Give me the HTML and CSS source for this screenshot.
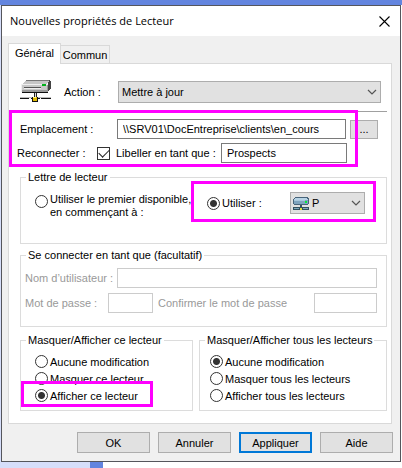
FILE: index.html
```html
<!DOCTYPE html>
<html lang="fr">
<head>
<meta charset="utf-8">
<title>Nouvelles propriétés de Lecteur</title>
<link rel="stylesheet" href="styles.css">
</head>
<body>
<div class="backdrop"></div>
<form class="dialog">
  <header class="titlebar">
    <h1>Nouvelles propriétés de Lecteur</h1>
    <button type="button" class="close" aria-label="Fermer">
      <svg width="11" height="11" viewBox="0 0 11 11"><path d="M.5.5l10 10M10.500.5l-10 10" stroke="#000" stroke-width="1.100" fill="none"/></svg>
    </button>
  </header>
  <nav class="tabs">
    <button type="button" class="tab active">Général</button>
    <button type="button" class="tab">Commun</button>
  </nav>
  <main class="panel">
    <div class="row action">
      <svg class="drive" width="32" height="24" viewBox="0 0 32 24" shape-rendering="crispEdges">
        <path d="M6 0h23v1H6z" fill="#777"/>
        <path d="M6 1h23l-2 3H2z" fill="#c6c6c6"/>
        <path d="M29 0h1v1h1v7l-3 4V4z" fill="#444"/>
        <path d="M1 4h27v8H1z" fill="#999"/>
        <path d="M1 4h27v1H2v7H1z" fill="#efefef"/>
        <path d="M2 5h25v5H2z" fill="#c8c8c8"/>
        <path d="M4 7h17v1H4z" fill="#555"/>
        <path d="M4 8h17v1H4z" fill="#eee"/>
        <path d="M22 4h4v2h-4z" fill="#00b01c"/>
        <path d="M2 12h26v1H2z" fill="#111"/>
        <path d="M14 13h3v4h-3z" fill="#222"/>
        <path d="M15 13h1v4h-1z" fill="#ddd"/>
        <path d="M0 17h31v1H0z" fill="#bbb"/>
        <path d="M0 18h9v1H0zM11 18h9v1h-9zM21 18h10v1H21z" fill="#111"/>
        <path d="M12 17h6v5h-6z" fill="#111"/>
        <path d="M13 17h4v4h-4z" fill="#dfb800"/>
        <path d="M13 17h3v1h-3z" fill="#ffef70"/>
      </svg>
      <label for="action">Action :</label>
      <span class="combo">
        <select id="action"><option>Mettre à jour</option></select>
        <svg width="10" height="6" viewBox="0 0 10 6"><path d="M1 1l4 4 4-4" fill="none" stroke="#555" stroke-width="1.200"/></svg>
      </span>
    </div>
    <section class="location marked">
      <div class="row">
        <label for="path" class="path-label">Emplacement :</label>
        <input id="path" class="path" type="text" value="\\SRV01\DocEntreprise\clients\en_cours">
        <button type="button" class="browse" aria-label="Parcourir">...</button>
      </div>
      <div class="row">
        <label for="reconnect" class="reconnect-label">Reconnecter :</label>
        <input id="reconnect" type="checkbox" checked>
        <label for="name" class="name-label">Libeller en tant que :</label>
        <input id="name" class="name" type="text" value="Prospects">
      </div>
    </section>
    <fieldset class="letter">
      <legend>Lettre de lecteur</legend>
      <div class="row">
        <input id="first" type="radio" name="letter">
        <label for="first" class="first-label">Utiliser le premier disponible,<br>en commençant à :</label>
        <div class="use marked">
          <input id="use" type="radio" name="letter" checked>
          <label for="use">Utiliser :</label>
          <span class="combo">
            <select id="drive" aria-label="Lettre"><option>P</option></select>
            <svg class="mini" width="17" height="14" viewBox="0 0 17 14" shape-rendering="crispEdges">
              <path d="M2 0h13v1h1v6h-1v1H1V7H0V2h1V1h1z" fill="#48647a"/>
              <path d="M2 1h12v1h1v1H1V2h1z" fill="#b7d3e5"/>
              <path d="M1 3h14v4H1z" fill="#7fa4bf"/>
              <path d="M1 3h11v1H1z" fill="#a8c8dc"/>
              <path d="M12 4h2v2h-2z" fill="#00ef35"/>
              <path d="M7 8h2v2H7zM0 10h16v3H0z" fill="#34505f"/>
              <path d="M1 11h14v1H1z" fill="#7ea9bb"/>
              <path d="M6 10h4v3H6z" fill="#34505f"/>
              <path d="M7 11h2v2H7z" fill="#e0e13c"/>
            </svg>
            <svg width="10" height="6" viewBox="0 0 10 6"><path d="M1 1l4 4 4-4" fill="none" stroke="#555" stroke-width="1.200"/></svg>
          </span>
        </div>
      </div>
    </fieldset>
    <fieldset class="connect" disabled>
      <legend>Se connecter en tant que (facultatif)</legend>
      <div class="row">
        <label for="user" class="user-label">Nom d’utilisateur :</label>
        <input id="user" class="user" type="text">
      </div>
      <div class="row">
        <label for="pass" class="pass-label">Mot de passe :</label>
        <input id="pass" class="pass" type="password">
        <label for="confirm" class="confirm-label">Confirmer le mot de passe</label>
        <input id="confirm" class="confirm" type="password">
      </div>
    </fieldset>
    <div class="visibility">
      <fieldset class="one">
        <legend>Masquer/Afficher ce lecteur</legend>
        <label><input type="radio" name="this">Aucune modification</label>
        <label><input type="radio" name="this">Masquer ce lecteur</label>
        <label class="marked"><input type="radio" name="this" checked>Afficher ce lecteur</label>
      </fieldset>
      <fieldset class="all">
        <legend>Masquer/Afficher tous les lecteurs</legend>
        <label><input type="radio" name="all" checked>Aucune modification</label>
        <label><input type="radio" name="all">Masquer tous les lecteurs</label>
        <label><input type="radio" name="all">Afficher tous les lecteurs</label>
      </fieldset>
    </div>
  </main>
  <footer class="buttons">
    <button type="button">OK</button>
    <button type="button">Annuler</button>
    <button type="button" class="primary">Appliquer</button>
    <button type="button">Aide</button>
  </footer>
</form>
<div class="taskbar"></div>
</body>
</html>
```
FILE: styles.css
```css
* { box-sizing: border-box; }
body {
  margin: 0;
  min-height: 100vh;
  background: linear-gradient(90deg, #d6defa 1px, #fff 1px);
  font: 11px/14px "Liberation Sans", sans-serif;
  color: #000;
}
.backdrop { height: 5px; background: #6385df; }
.taskbar { height: 6px; background: linear-gradient(90deg, #d6defa 90px, #6385df 90px, #6385df 103px, #fff 103px); }
.dialog { margin: 0 1px; border: 1px solid #55565c; background: #f0f0f0; }
button, input, select { font: inherit; color: inherit; margin: 0; border-radius: 0; }
button { padding: 0; border: 1px solid #adadad; background: #e1e1e1; }
label { white-space: nowrap; }

.titlebar { display: flex; align-items: center; justify-content: space-between; height: 30px; padding: 0 10px 0 8px; background: #fff; }
h1 { margin: 0; font: 11px/16px "Open Sans", sans-serif; }
.close { display: flex; border: 0; background: none; }

.tabs { display: flex; align-items: flex-end; height: 27px; padding-left: 6px; }
.tab { width: 49px; height: 18px; border: 1px solid #d9d9d9; border-width: 1px 1px 0 0; background: #f0f0f0; }
.tab.active { position: relative; width: 53px; height: 21px; margin-bottom: -1px; padding-bottom: 3px; border-left-width: 1px; background: #fff; }
.panel { margin: 0 8px 0 6px; padding: 17px 4px 12px 11px; border: 1px solid #d9d9d9; background: #fff; }
.row { display: flex; align-items: center; }

.action { height: 22px; padding-right: 6px; }
.drive { margin-right: 12px; }
.action label { width: 54px; }
.action .combo { flex: 1; }
.combo { position: relative; display: flex; height: 22px; }
.combo select { flex: 1; width: 100%; padding: 0 0 0 3px; border: 1px solid #adadad; background: #e1e1e1; appearance: none; }
.combo svg { position: absolute; right: 4px; top: 8px; }
.combo .mini { left: 3px; top: 5px; }

input[type="text"], input[type="password"] { min-width: 0; height: 20px; padding: 0 5px; border: 1px solid #7a7a7a; background: #fff; }
input[type="radio"], input[type="checkbox"] { flex: none; appearance: none; width: 13px; height: 13px; border: 1px solid #333; background: #fff; }
input[type="radio"] { border-radius: 50%; }
input[type="radio"]:checked { background: radial-gradient(circle, #333 3px, #fff 4px); }
input[type="checkbox"] { position: relative; }
input[type="checkbox"]:checked::after { content: ""; position: absolute; left: 1px; top: 1px; width: 9px; height: 5px; border: solid #222; border-width: 0 0 1px 1px; transform: rotate(-45deg); }

.marked { position: relative; }
.marked::after { content: ""; position: absolute; border: 3px solid #f0f; pointer-events: none; }

.location { display: grid; grid-template-columns: minmax(0, 1fr); gap: 4px; margin-top: 8px; padding-top: 7px; border-top: 1px solid #a0a0a0; }
.location::after { left: -11px; right: 29px; top: -2px; bottom: -4px; }
.path-label { width: 97px; }
.path { flex: 1; }
.browse { width: 28px; height: 19px; margin: 0 9px 0 4px; }
.reconnect-label { width: 80px; margin-left: -3px; }
.name-label { width: 105px; margin-left: 6px; }
.name { flex: 1; margin-right: 40px; }

fieldset { min-width: 0; margin: 0; padding: 0; border: 1px solid #dcdcdc; }
legend { margin-left: 5px; padding: 0 2px; line-height: 14px; white-space: nowrap; }
.letter { height: 74px; margin-top: 7px; }
.letter .row { align-items: flex-start; padding: 11px 21px 0 14px; }
.first-label { margin: -2px auto 0 2px; line-height: 13px; }
.use { display: flex; align-items: center; height: 22px; margin-top: -3px; }
.use::after { left: -16px; right: -11px; top: -11px; bottom: -8px; }
.use label { width: 68px; margin-left: 2px; }
.use .combo { width: 75px; }
.use select { padding-left: 21px; }

.connect { height: 79px; margin-top: 4px; color: #999; }
.connect .row { padding: 0 9px 0 4px; }
.connect .row + .row { margin-top: 5px; }
.connect legend { color: #000; margin-bottom: 6px; }
.connect input { border-color: #ccc; }
.user-label { width: 92px; }
.user { flex: 1; }
.pass-label { width: 83px; }
.pass { width: 45px; }
.confirm-label { margin: 0 auto 0 5px; }
.confirm { width: 63px; }

.visibility { display: grid; grid-template-columns: 173fr 188fr; gap: 6px; margin-top: 6px; }
.visibility fieldset { height: 78px; }
.visibility fieldset label { display: flex; align-items: center; gap: 2px; height: 17px; padding-left: 14px; }
.visibility legend { margin-bottom: 6px; }
.visibility .all label { padding-left: 10px; }
.visibility label.marked::after { left: 0; right: 39px; top: -6px; bottom: -3px; }

.buttons { display: flex; justify-content: flex-end; gap: 8px; padding: 8px 7px 8px; }
.buttons button { width: 73px; height: 21px; }
.buttons .primary { border: 2px solid #0078d7; }
```
